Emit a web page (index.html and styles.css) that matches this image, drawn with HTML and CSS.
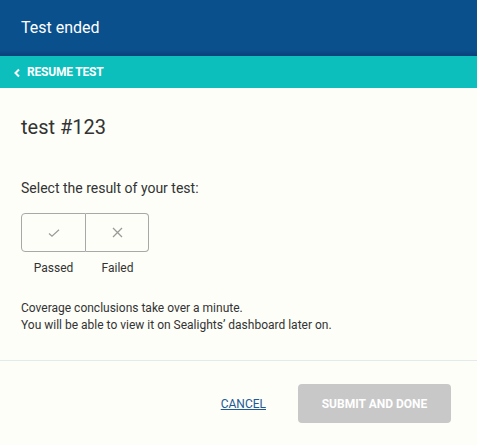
FILE: index.html
```html
<!DOCTYPE html>
<html>
<head>
<meta charset="utf-8">
<link rel="stylesheet" href="styles.css">
</head>
<body>
<div class="dialog">
  <header class="header">Test ended</header>
  <div class="resume">
    <svg class="chev" width="8" height="10" viewBox="0 0 8 10"><path d="M6 1.5 L2.5 5 L6 8.5" fill="none" stroke="#fff" stroke-width="2"/></svg>
    <span>RESUME TEST</span>
  </div>
  <main class="content">
    <h1 class="title">test #123</h1>
    <p class="prompt">Select the result of your test:</p>
    <div class="choices">
      <div class="choice">
        <div class="box left"><svg width="12" height="10" viewBox="0 0 12 10"><path d="M1 5.5 L4 8.3 L11 1.8" fill="none" stroke="#9a9a9a" stroke-width="1.2"/></svg></div>
        <div class="label">Passed</div>
      </div>
      <div class="choice">
        <div class="box right"><svg width="11" height="11" viewBox="0 0 11 11"><path d="M1 1 L10 10 M10 1 L1 10" fill="none" stroke="#9a9a9a" stroke-width="1.3"/></svg></div>
        <div class="label">Failed</div>
      </div>
    </div>
    <p class="note">Coverage conclusions take over a minute.<br>You will be able to view it on Sealights’ dashboard later on.</p>
  </main>
  <footer class="footer">
    <a class="cancel" href="#">CANCEL</a>
    <button class="submit">SUBMIT AND DONE</button>
  </footer>
</div>
</body>
</html>
```
FILE: styles.css
```css
html, body {
  margin: 0;
  padding: 0;
  background: #fdfef8;
  font-family: Roboto, "Liberation Sans", Arial, sans-serif;
}
.dialog {
  width: 477px;
  height: 445px;
  display: flex;
  flex-direction: column;
}
.header {
  height: 56px;
  box-sizing: border-box;
  padding: 18px 0 0 21px;
  font-size: 16px;
  color: #fff;
  background: linear-gradient(to bottom, #0a508d 0px, #0a508d 50px, #083f7a 56px);
}
.resume {
  height: 32px;
  background: #0cbfbd;
  display: flex;
  align-items: center;
  padding-left: 13px;
  color: #fff;
  font-weight: bold;
  font-size: 12px;
  letter-spacing: -0.2px;
}
.chev {
  margin-right: 6px;
  margin-top: 1px;
}
.content {
  padding: 0 21px;
  border-bottom: 1px solid #e2eaf0;
  height: 273px;
  box-sizing: border-box;
}
.title {
  margin: 27px 0 0;
  font-size: 20px;
  font-weight: normal;
  color: #333;
  line-height: 24px;
}
.prompt {
  margin: 41px 0 0;
  font-size: 14px;
  color: #333;
  line-height: 16px;
}
.choices {
  display: flex;
  margin-top: 17px;
}
.choice {
  display: flex;
  flex-direction: column;
  align-items: center;
}
.box {
  height: 39px;
  box-sizing: border-box;
  border: 1px solid #a8a8a8;
  display: flex;
  align-items: center;
  justify-content: center;
  background: #fdfef8;
}
.box.left {
  width: 65px;
  border-radius: 4px 0 0 4px;
}
.box.right {
  width: 63px;
  border-left: none;
  border-radius: 0 4px 4px 0;
}
.label {
  margin-top: 9px;
  font-size: 12px;
  color: #333;
  line-height: 14px;
}
.note {
  margin: 25px 0 0;
  font-size: 12px;
  line-height: 17px;
  color: #333;
}
.footer {
  display: flex;
  align-items: center;
  justify-content: flex-end;
  padding: 23px 26px 0 0;
}
.cancel {
  font-size: 12px;
  color: #1f5a96;
  text-decoration: underline;
  margin-right: 32px;
}
.submit {
  width: 153px;
  height: 39px;
  border: none;
  border-radius: 4px;
  background: #c8c8c8;
  color: #fff;
  font-family: Roboto, "Liberation Sans", Arial, sans-serif;
  font-weight: bold;
  font-size: 12px;
  padding: 0;
}
```
